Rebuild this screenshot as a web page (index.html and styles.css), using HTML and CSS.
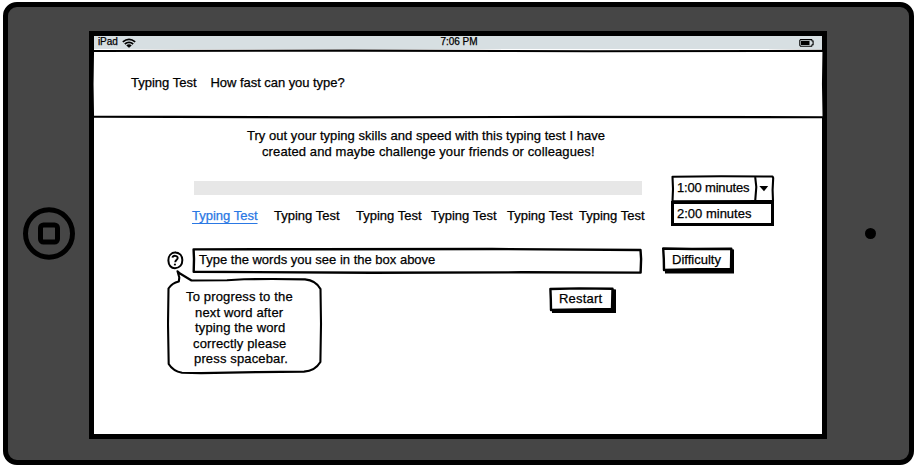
FILE: index.html
```html
<!DOCTYPE html>
<html lang="en">
<head>
<meta charset="utf-8">
<title>Typing Test</title>
<link rel="stylesheet" href="styles.css">
</head>
<body>
<div class="device">
  <div class="bezel">
    <svg class="home" width="52" height="54" viewBox="0 0 52 54"><ellipse cx="26" cy="26.5" rx="23.5" ry="23.7"/><rect x="17.5" y="18" width="17" height="17" rx="3"/></svg>
  </div>
  <div class="screen">
    <div class="status">
      <div class="carrier"><span class="ipad">iPad</span><svg width="14" height="10" viewBox="0 0 14 10"><path d="M.8 3.8Q7-1.2 13.2 3.8M2.8 6Q7 2.8 11.2 6M4.8 7.9Q7 6.2 9.2 7.9" fill="none" stroke="#000" stroke-width="1.7"/><path d="M5.4 8h3.2L7 9.9z"/></svg></div>
      <span class="clock">7:06 PM</span>
      <svg class="battery" width="16" height="8" viewBox="0 0 16 8"><path d="M1.5.6h11.2l.4 1.4h1v3.8h-1l-.4 1.4H1.5L.8 6.4v-5z" fill="none" stroke="#000" stroke-width="1.1"/><path d="M2 2h8.5v4H2z"/></svg>
    </div>
    <header class="header">
      <svg class="sketch" width="734" height="71" viewBox="0 0 734 71"><path d="M2 2L260 1.6L500 2.3L732.5 1.8L732 35L732.6 68.2L480 67.9L260 68.4L2 67.6L1.5 35Z"/></svg>
      <span class="brand">Typing Test</span><span class="tagline">How fast can you type?</span>
    </header>
    <main class="content">
      <div class="intro"><p class="line-one">Try out your typing skills and speed with this typing test I have</p><p class="line-two">created and maybe challenge your friends or colleagues!</p></div>
      <div class="board">
        <div class="help">
          <svg width="18" height="19" viewBox="0 0 18 19"><path d="M8.8 1.3C4 1.5 1.2 5 1.4 9.8C1.5 14.5 4.3 17.3 8 17.2C12.8 17 15.5 13.6 15.3 8.8C15 4.3 12.3 1.2 7.5 1.5" stroke-width="2"/><path d="M5.5 6.7C5.8 4.2 10.8 4.1 10.7 7C10.6 8.8 8.4 8.6 8.2 11.2" stroke-width="1.9"/><path d="M7.9 12.7V14.4" stroke-width="2"/></svg>
          <div class="bubble">
            <svg class="sketch" width="156" height="106" viewBox="0 0 156 106"><path d="M10.5 2.2L13 4.5L24.5 11.5L60 11.2L77 10.2L105 10L138 10.4Q149 11.5 153.5 20L154 55L153.4 93Q148 102 137 102.6L90 103.1L34 104.1L15 103.8Q6 102 1.7 95L1 55L1.5 19.5Q5 14 11.8 12.5L12.3 8.5Z"/></svg>
            <p class="b1">To progress to the</p><p class="b2">next word after</p><p class="b3">typing the word</p><p class="b4">correctly please</p><p class="b5">press spacebar.</p>
          </div>
        </div>
        <div class="middle">
          <div class="progress"></div>
          <div class="words"><span class="active">Typing Test</span><span>Typing Test</span><span>Typing Test</span><span>Typing Test</span><span>Typing Test</span><span>Typing Test</span></div>
          <div class="input">
            <svg class="sketch" width="451" height="28" viewBox="0 0 451 28"><path d="M1.6 2.4L120 2.2L300 2L448.5 3L449.1 12L448.6 25.6L330 25.3L180 25.7L1.7 24.8L2 12Z"/></svg>
            <span>Type the words you see in the box above</span>
          </div>
          <div class="button restart">
            <svg class="sketch" width="68" height="26" viewBox="0 0 68 26"><path class="shadow" d="M3 22L63 21V2L67 2.5V26H3Z"/><path d="M1.4 2L30 1.4L63.5 1.8L63 22L30 22.4L2 23L1.8 12Z"/></svg>
            <span>Restart</span>
          </div>
        </div>
        <div class="side">
          <div class="select">
            <svg class="sketch" width="104" height="28" viewBox="0 0 104 28"><path d="M1.5 1.8L50 1.2L101.5 1.5L102.2 3L101.6 15L102 26L1.5 26.3L2 14ZM84.2 2L85.3 12L84.2 26"/><path class="arrow" d="M88.3 11H97.2L93 16.3Z"/></svg>
            <span>1:00 minutes</span>
          </div>
          <div class="option"><span>2:00 minutes</span></div>
          <div class="button difficulty">
            <svg class="sketch" width="73" height="27" viewBox="0 0 73 27"><path class="shadow" d="M3 22L68 21V2L72 2.5V26.5H3Z"/><path d="M1.2 1.5L30 2L69.3 1.8L69 22L35 22.2L2 23L1.8 12Z"/></svg>
            <span>Difficulty</span>
          </div>
        </div>
      </div>
    </main>
  </div>
  <div class="bezel"><div class="camera"></div></div>
</div>
</body>
</html>
```
FILE: styles.css
```css
* { box-sizing: border-box; }
body { margin: 0; background: #fff; color: #000; font: 13px/16px "Liberation Sans", sans-serif; white-space: nowrap; overflow: hidden; -webkit-text-stroke: .25px; }
p { margin: 0; }
svg { display: block; flex: none; }
.device { display: grid; grid-template-columns: 81px 738px 1fr; align-items: start; width: 911px; height: 463px; margin: 2px 0 0 3px; padding-top: 24px; border: 5px solid #000; border-radius: 14px; background: #464646; }
.bezel { display: flex; justify-content: center; }
.home { margin: 176px 0 0 1px; fill: none; stroke: #000; stroke-width: 5; }
.camera { width: 11px; height: 11px; margin: 197px 0 0 4px; border-radius: 50%; background: #000; }
.screen { width: 738px; height: 408px; border: 5px solid #000; background: #fff; }
.status { display: grid; grid-template-columns: 1fr auto 1fr; align-items: center; height: 13px; padding: 0 7px 0 4px; background: #d7dfe2; font-size: 10px; line-height: 11px; }
.carrier { display: flex; align-items: center; gap: 4px; }
.ipad, .clock { margin-top: -2px; }
.ipad { letter-spacing: -.1px; }
.clock { margin-left: 5px; letter-spacing: -.05px; }
.battery { justify-self: end; }
.sketch { position: absolute; top: 0; left: 0; fill: #fff; stroke: #000; stroke-width: 2.1; stroke-linejoin: round; }
.input .sketch, .button .sketch { stroke-width: 2.4; }
.sketch .shadow, .sketch .arrow { fill: #000; stroke: none; }
.header, .bubble, .input, .button, .select { position: relative; }
.header span, .bubble p, .input span, .button span, .select span { position: relative; }
.header { display: flex; align-items: center; gap: 14px; height: 69px; padding: 0 0 2px 37px; }
.header .sketch { left: -3px; }
.tagline { letter-spacing: -.05px; }
.intro { display: flex; flex-direction: column; padding: 10px 0 0 153px; }
.line-one { letter-spacing: .035px; }
.line-two { margin-left: 15px; letter-spacing: .11px; }
.board { display: grid; grid-template-columns: 25px 450px 1fr; margin: 15px 0 0 73px; }
.help { padding: 76px 0 0 0; }
.help svg { fill: none; stroke: #000; }
.help .bubble { width: 156px; height: 106px; margin: -1px 0 0; padding-top: 20px; line-height: 15.6px; letter-spacing: .15px; }
.help .bubble .sketch { fill: #fff; }
.b1 { margin-left: 19px; }
.b2 { margin-left: 28px; }
.b3 { margin-left: 28px; }
.b4 { margin-left: 26px; }
.b5 { margin-left: 27px; }
.progress { width: 448px; height: 14px; margin: 6px 0 0 2px; background: #e7e7e7; }
.words { display: grid; grid-template-columns: 82px 82px 75px 76px 72px 66px; margin-top: 13px; }
.words .active { color: #2a78e4; text-decoration: underline; text-underline-offset: 3px; justify-self: start; }
.input { height: 28px; margin-top: 23px; padding: 5px 0 0 7px; }
.restart { width: 68px; height: 26px; margin: 12px 0 0 357px; padding: 4px 0 0 10px; letter-spacing: .2px; }
.side { padding-left: 29px; }
.select { width: 104px; height: 27px; padding: 5px 0 0 6px; letter-spacing: -.18px; }
.option { position: relative; width: 103px; height: 25px; margin-top: -1px; padding: 2px 0 0 3px; border: 3px solid #000; background: #fff; }
.difficulty { width: 73px; height: 27px; margin: 21px 0 0 -9px; padding: 5px 0 0 10px; }
```
